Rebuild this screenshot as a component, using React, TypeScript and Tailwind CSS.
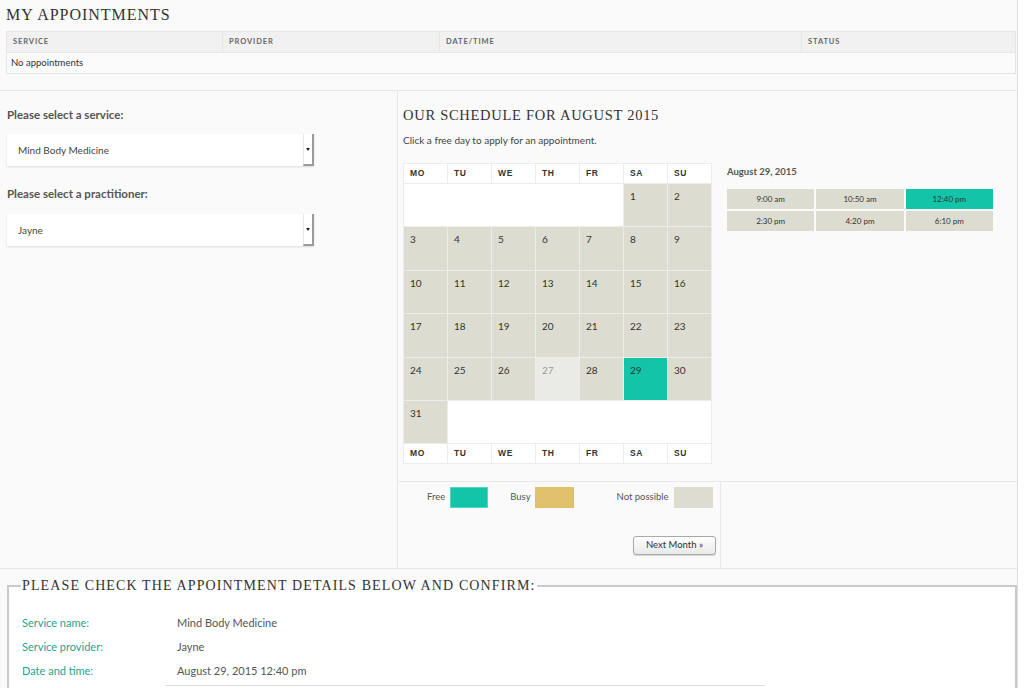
const sans = "font-['Lato','Liberation_Sans',sans-serif]";
const serif = "font-['Liberation_Serif','DejaVu_Serif',serif]";

const days = ["MO", "TU", "WE", "TH", "FR", "SA", "SU"];

type Day = { n: number; kind: "off" | "past" | "free" };

const weeks: (Day | null)[][] = [
  [null, null, null, null, null, { n: 1, kind: "off" }, { n: 2, kind: "off" }],
  [3, 4, 5, 6, 7, 8, 9].map((n) => ({ n, kind: "off" as const })),
  [10, 11, 12, 13, 14, 15, 16].map((n) => ({ n, kind: "off" as const })),
  [17, 18, 19, 20, 21, 22, 23].map((n) => ({ n, kind: "off" as const })),
  [24, 25, 26, 27, 28, 29, 30].map((n) => ({
    n,
    kind: n === 27 ? ("past" as const) : n === 29 ? ("free" as const) : ("off" as const),
  })),
  [{ n: 31, kind: "off" }, null, null, null, null, null, null],
];

const slots = ["9:00 am", "10:50 am", "12:40 pm", "2:30 pm", "4:20 pm", "6:10 pm"];

function DayHead() {
  return (
    <tr>
      {days.map((d) => (
        <td
          key={d}
          className="h-[20px] w-[44px] border border-[#ececec] bg-white pl-[6px] font-['Liberation_Sans',sans-serif] text-[8.5px] font-bold tracking-[0.08em] text-[#333]"
        >
          {d}
        </td>
      ))}
    </tr>
  );
}

function Calendar() {
  return (
    <table className="w-[307px] table-fixed border-collapse">
      <tbody>
        <DayHead />
        {weeks.map((w, i) => {
          const cells: React.ReactNode[] = [];
          let blank = 0;
          const flush = (key: string) => {
            if (blank > 0) {
              cells.push(<td key={key} colSpan={blank} className="h-[43.4px] border border-[#ececec] bg-white" />);
              blank = 0;
            }
          };
          w.forEach((d, j) => {
            if (!d) {
              blank++;
              return;
            }
            flush(`b${j}`);
            const bg =
              d.kind === "free" ? "bg-[#13c4a9] text-[#1d3b36]" : d.kind === "past" ? "bg-[#ebebe5] text-[#999]" : "bg-[#dcdcd0] text-[#333]";
            cells.push(
              <td key={j} className={`h-[43.4px] border border-[#ececec] pl-[6px] pt-[5px] align-top text-[10px] ${bg}`}>
                {d.n}
              </td>
            );
          });
          flush("end");
          return <tr key={i}>{cells}</tr>;
        })}
        <DayHead />
      </tbody>
    </table>
  );
}

function SelectBox({ value }: { value: string }) {
  return (
    <div className="flex h-[32px] w-[307px] items-stretch bg-white shadow-[0_1px_2px_rgba(0,0,0,0.12)]">
      <div className="flex flex-1 items-center pl-[11px] text-[10px] text-[#444]">{value}</div>
      <div className="flex w-[11px] items-center justify-center border-r-[2px] border-b-[2px] border-l border-r-[#9a9a9a] border-b-[#9a9a9a] border-l-[#e6e6e6]">
        <span className="block h-0 w-0 border-x-[2.5px] border-t-[3px] border-x-transparent border-t-[#222]" />
      </div>
    </div>
  );
}

export default function App() {
  return (
    <div className={`min-h-[688px] w-full overflow-hidden bg-white ${sans}`}>
      <div className="w-[1018px] border-r border-[#dedede] bg-[#fafafa]">
        {/* my appointments */}
        <div className="h-[91px] border-b border-[#e8e8e8] pl-[6px] pr-[1px] pt-[5px]">
          <h2 className={`${serif} text-[16px] leading-[20px] tracking-[0.06em] text-[#333]`}>MY APPOINTMENTS</h2>
          <div className="mt-[6px] border border-[#e6e6e6]">
            <div className="grid h-[20px] grid-cols-[216px_217px_362px_1fr] bg-[#f1f1f1] text-[7.5px] font-bold tracking-[0.12em] text-[#666]">
              <div className="flex items-center border-r border-[#e6e6e6] pl-[6px]">SERVICE</div>
              <div className="flex items-center border-r border-[#e6e6e6] pl-[6px]">PROVIDER</div>
              <div className="flex items-center border-r border-[#e6e6e6] pl-[6px]">DATE/TIME</div>
              <div className="flex items-center pl-[6px]">STATUS</div>
            </div>
            <div className="flex h-[21px] items-center border-t border-[#e6e6e6] bg-[#fbfbfb] pl-[4px] text-[9.5px] text-[#333]">
              No appointments
            </div>
          </div>
        </div>

        {/* booking area */}
        <div className="flex h-[477px]">
          <div className="w-[398px] border-r border-[#e8e8e8] pl-[7px] pt-[16px]">
            <p className="text-[11.5px] font-bold leading-[16px] text-[#555]">Please select a service:</p>
            <div className="mt-[11px]">
              <SelectBox value="Mind Body Medicine" />
            </div>
            <p className="mt-[20px] text-[11.5px] font-bold leading-[16px] text-[#555]">Please select a practitioner:</p>
            <div className="mt-[12px]">
              <SelectBox value="Jayne" />
            </div>
          </div>

          <div className="flex flex-1 flex-col">
            <div className="flex h-[391px] border-b border-[#e8e8e8] pl-[5px] pt-[14px]">
              <div>
                <h3 className={`${serif} text-[14.5px] leading-[20px] tracking-[0.05em] text-[#333]`}>
                  OUR SCHEDULE FOR AUGUST 2015
                </h3>
                <p className="mt-[8px] text-[10px] leading-[14px] text-[#444]">Click a free day to apply for an appointment.</p>
                <div className="mt-[16px]">
                  <Calendar />
                </div>
              </div>
              <div className="ml-[15px] pt-[60px]">
                <p className="text-[9.5px] font-bold leading-[14px] text-[#555]">August 29, 2015</p>
                <div className="mt-[10px] grid w-[266px] grid-cols-3 gap-[2px]">
                  {slots.map((s) => (
                    <div
                      key={s}
                      className={`flex h-[20px] items-center justify-center text-[8px] text-[#333] ${
                        s === "12:40 pm" ? "bg-[#13c4a9]" : "bg-[#dcdcd0]"
                      }`}
                    >
                      {s}
                    </div>
                  ))}
                </div>
              </div>
            </div>

            <div className="flex flex-1">
              <div className="w-[323px] border-r border-[#e8e8e8] pt-[5px]">
                <div className="flex h-[21px] items-center text-[9.5px] text-[#555]">
                  <span className="ml-[29px]">Free</span>
                  <span className="ml-[5px] h-[21px] w-[38px] border border-[#4fd9c3] bg-[#13c4a9]" />
                  <span className="ml-[22px]">Busy</span>
                  <span className="ml-[4px] h-[21px] w-[39px] bg-[#dfc26b]" />
                  <span className="ml-[43px]">Not possible</span>
                  <span className="ml-[5px] h-[21px] w-[39px] bg-[#dcdcd0]" />
                </div>
                <div className="mt-[28px] flex justify-end pr-[4px]">
                  <button
                    type="button"
                    className="h-[19px] w-[83px] rounded-[3px] border border-[#a9a9a9] bg-gradient-to-b from-white to-[#e9e9e9] text-[9.5px] text-[#333] shadow-[0_1px_1px_rgba(0,0,0,0.15)]"
                  >
                    Next Month »
                  </button>
                </div>
              </div>
              <div className="flex-1" />
            </div>
          </div>
        </div>

        {/* confirmation */}
        <div className="border-t border-[#e8e8e8] pl-[7px] pt-[6px]">
          <fieldset className="min-h-[130px] border-[2px] border-[#c9c9c9] bg-white px-[13px] pt-[15px]">
            <legend className={`${serif} -ml-[1px] px-[1px] text-[14px] tracking-[0.08em] text-[#333]`}>
              PLEASE CHECK THE APPOINTMENT DETAILS BELOW AND CONFIRM:
            </legend>
            {[
              ["Service name:", "Mind Body Medicine"],
              ["Service provider:", "Jayne"],
              ["Date and time:", "August 29, 2015 12:40 pm"],
            ].map(([k, v]) => (
              <div key={k} className="flex h-[24px] items-center text-[11px]">
                <span className="w-[155px] text-[#1fa38d]">{k}</span>
                <span className="text-[#555]">{v}</span>
              </div>
            ))}
            <div className="ml-[143px] mt-[2px] w-[600px] border-t border-[#ddd]" />
          </fieldset>
        </div>
      </div>
    </div>
  );
}
